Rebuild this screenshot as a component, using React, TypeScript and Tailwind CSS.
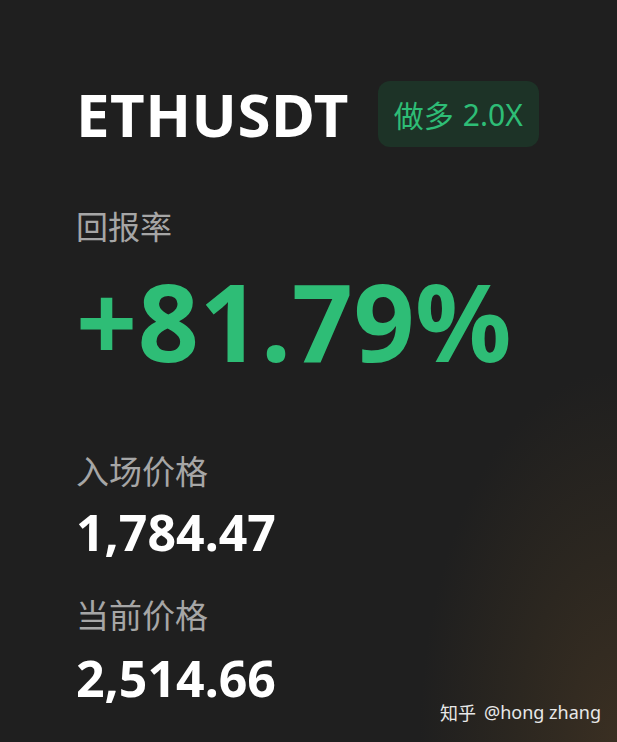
import React from 'react';

const sans = '"Noto Sans", "Noto Sans CJK SC", sans-serif';
const cjk = '"Noto Sans CJK SC", "Noto Sans", sans-serif';

const App: React.FC = () => {
    return (
        <div
            className="relative w-[617px] h-[742px] overflow-hidden bg-[#1f1f1f] bg-[radial-gradient(ellipse_32%_50%_at_100%_100%,#3a2f22_0%,#2c2720_50%,transparent_100%)]"
            style={{ fontFamily: sans }}
        >
            <div className="flex flex-col pl-[76px] pt-[81px]">
                <div className="flex items-center gap-[29px]">
                    <h1 className="text-[60px] leading-[66px] font-bold text-white tracking-[0.5px]">ETHUSDT</h1>
                    <div className="flex items-center h-[66px] px-[16px] rounded-[12px] bg-[#1d3327] text-[#2ebd76] text-[30px]">
                        <span style={{ fontFamily: cjk }}>做多</span>
                        <span className="ml-[9px]">2.0X</span>
                    </div>
                </div>

                <p className="mt-[58px] text-[32px] leading-[40px] text-[#a6a6a6]" style={{ fontFamily: cjk }}>回报率</p>
                <p className="mt-[21px] text-[107px] leading-[110px] font-bold text-[#2ebd76] tracking-[0.5px]">+81.79%</p>

                <p className="mt-[74px] text-[33px] leading-[40px] text-[#a6a6a6]" style={{ fontFamily: cjk }}>入场价格</p>
                <p className="mt-[14px] text-[50px] leading-[56px] font-bold text-white">1,784.47</p>

                <p className="mt-[34px] text-[33px] leading-[40px] text-[#a6a6a6]" style={{ fontFamily: cjk }}>当前价格</p>
                <p className="mt-[16px] text-[50px] leading-[56px] font-bold text-white">2,514.66</p>
            </div>

            <div className="absolute right-[16px] bottom-[16px] text-[18px] text-[#e8e8e8] flex items-center gap-[8px]">
                <span style={{ fontFamily: cjk }}>知乎</span>
                <span>@hong zhang</span>
            </div>
        </div>
    );
};

export default App;
